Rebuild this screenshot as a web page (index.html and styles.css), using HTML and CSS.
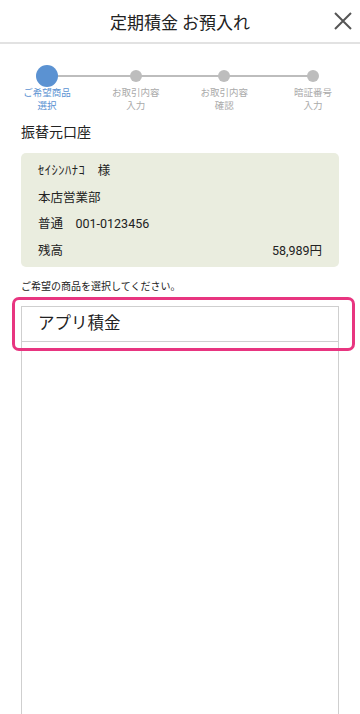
FILE: index.html
```html
<!DOCTYPE html>
<html lang="ja">
<head>
    <meta charset="UTF-8">
    <meta name="viewport" content="width=device-width, initial-scale=1.0">
    <title>定期積金 お預入れ</title>
    <link rel="stylesheet" href="styles.css">
</head>
<body>

<div id="header">
    <div class="title">定期積金 お預入れ</div>
    <div class="close">
        <svg width="18" height="18" viewBox="0 0 18 18">
            <path d="M1 1 L17 17 M17 1 L1 17" stroke="#555" stroke-width="2" fill="none"/>
        </svg>
    </div>
</div>

<div id="steps">
    <div class="step_line"></div>
    <div class="step current">
        <div class="dot"></div>
        <div class="step_lable">ご希望商品<br>選択</div>
    </div>
    <div class="step">
        <div class="dot"></div>
        <div class="step_lable">お取引内容<br>入力</div>
    </div>
    <div class="step">
        <div class="dot"></div>
        <div class="step_lable">お取引内容<br>確認</div>
    </div>
    <div class="step">
        <div class="dot"></div>
        <div class="step_lable">暗証番号<br>入力</div>
    </div>
</div>

<div id="main">
    <div class="section_lable">振替元口座</div>
    <div class="account">
        <div class="account_row"><span class="kana">ｾｲｼﾝﾊﾅｺ</span>　様</div>
        <div class="account_row">本店営業部</div>
        <div class="account_row">普通　001-0123456</div>
        <div class="account_row balance">
            <span>残高</span>
            <span>58,989円</span>
        </div>
    </div>
    <div class="hint">ご希望の商品を選択してください。</div>
    <div class="product_list">
        <div class="product selected">アプリ積金</div>
    </div>
</div>

</body>
</html>
```

FILE: styles.css
```css
body{
    margin: 0;
    font-family: Roboto, "Noto Sans CJK JP", sans-serif;
    color: #222;
    background-color: white;
    height: 714px;
    overflow: hidden;
    display: flex;
    flex-direction: column;
}
#header{
    position: relative;
    height: 42px;
    border-bottom: 2px #e2e2e2 solid;
    display: flex;
    align-items: center;
    justify-content: center;
    flex-shrink: 0;
}
.title{
    font-size: 17px;
    color: #222;
}
.close{
    position: absolute;
    right: 8px;
    top: 12px;
    width: 18px;
    height: 18px;
}
#steps{
    position: relative;
    display: flex;
    justify-content: space-between;
    padding: 0 4px;
    margin-top: 19px;
    flex-shrink: 0;
}
.step_line{
    position: absolute;
    left: 47px;
    right: 48px;
    top: 12px;
    height: 2px;
    background-color: #bdbdbd;
}
.step{
    position: relative;
    width: 86px;
    display: flex;
    flex-direction: column;
    align-items: center;
}
.dot{
    width: 12px;
    height: 12px;
    margin: 7px 0 4px;
    border-radius: 50%;
    background-color: #bdbdbd;
}
.current .dot{
    width: 22px;
    height: 22px;
    margin: 2px 0 -1px;
    background-color: #5b92d2;
}
.step_lable{
    font-size: 9.5px;
    line-height: 13px;
    text-align: center;
    color: #aaa;
}
.current .step_lable{
    color: #5b92d2;
}
#main{
    display: flex;
    flex-direction: column;
    padding: 0 21px;
    flex: 1;
    min-height: 0;
}
.section_lable{
    margin-top: 9px;
    font-size: 14px;
    line-height: 22px;
}
.account{
    margin-top: 10px;
    background-color: #eaeddf;
    border-radius: 5px;
    padding: 5px 17px 3px 17px;
}
.account_row{
    font-size: 12.5px;
    line-height: 26.5px;
}
.kana{
    letter-spacing: 0.5px;
}
.balance{
    display: flex;
    justify-content: space-between;
}
.hint{
    margin-top: 13px;
    font-size: 10px;
    line-height: 14px;
}
.product_list{
    margin-top: 12px;
    flex: 1;
    border: 1px #cfcfcf solid;
    border-bottom: none;
}
.product{
    position: relative;
    height: 34px;
    line-height: 34px;
    padding-left: 16px;
    font-size: 16.5px;
    border-bottom: 1px #cfcfcf solid;
}
.selected::after{
    content: "";
    position: absolute;
    left: -10px;
    right: -17px;
    top: -10px;
    bottom: -10px;
    border: 3px #e83580 solid;
    border-radius: 7px;
}
```
